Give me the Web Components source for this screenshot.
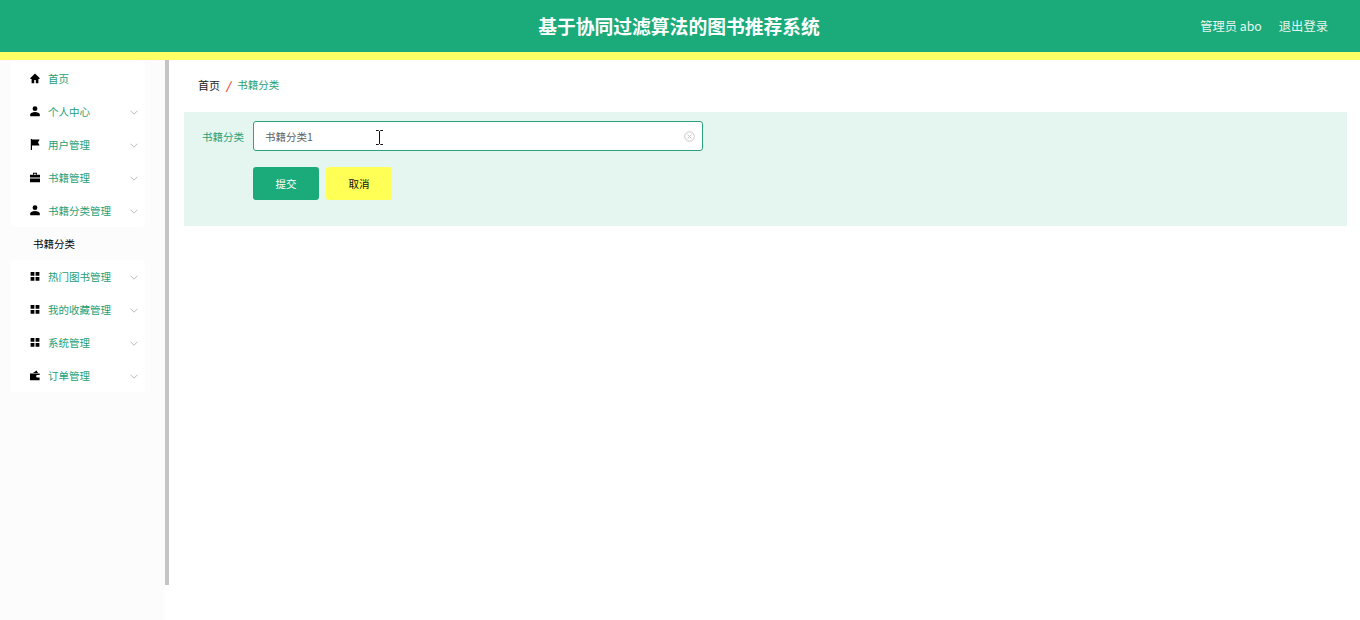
<!DOCTYPE html>
<html lang="zh">
<head>
<meta charset="utf-8">
<title>书籍分类</title>
<style>
	html, body { margin: 0; height: 100%; overflow: hidden; }
	body { font-family: "Microsoft YaHei", "Noto Sans CJK SC", "Liberation Sans", sans-serif; }
	.layout { display: flex; height: 560px; }
</style>
</head>
<body>
<app-header></app-header>
<div class="layout">
	<side-menu>
		<menu-row icon="home" label="首页" flat></menu-row>
		<menu-row icon="user" label="个人中心"></menu-row>
		<menu-row icon="flag" label="用户管理"></menu-row>
		<menu-row icon="case" label="书籍管理"></menu-row>
		<menu-row icon="user" label="书籍分类管理"></menu-row>
		<menu-sub slot="sub" label="书籍分类"></menu-sub>
		<menu-row slot="after" icon="grid" label="热门图书管理"></menu-row>
		<menu-row slot="after" icon="grid" label="我的收藏管理"></menu-row>
		<menu-row slot="after" icon="grid" label="系统管理"></menu-row>
		<menu-row slot="after" icon="wallet" label="订单管理"></menu-row>
	</side-menu>
	<main-panel></main-panel>
</div>

<script>
const icons = {
	home: '<path d="M5 .6.4 5v1h1.200v4.200h2.600V7h1.600v3.200h2.600V6h1.200V5z"/>',
	user: '<circle cx="5" cy="2.700" r="2.400"/><path d="M.2 10.200V8.600C.2 6.900 2.600 6 5 6s4.800.9 4.800 2.600v1.600z"/>',
	flag: '<path d="M.8 0h1.200v11H.8zM2 .6h7.600L8 3.600l1.600 3H2z"/>',
	case: '<path d="M3 2.400V.8h4v1.600H6V1.800H4v.6zM0 2.800h10v2.800H0zM0 6.400h10v3.800H0z"/>',
	grid: '<path d="M.6 1h3.800v3.800H.6zM5.600 1h3.800v3.800H5.600zM.6 6h3.800v3.800H.6zM5.600 6h3.800v3.800H5.600z"/>',
	wallet: '<path d="M0 3.400h9.600V5H7a1.400 1.400 0 0 0 0 2.600h2.600v2.600H0zM3 3l3.600-2.600L8 3z"/>',
};

class AppHeader extends HTMLElement {
	constructor() {
		super();
		this.attachShadow({ mode: 'open' });
		this.shadowRoot.innerHTML = `
			<style>
				:host { display: block; box-sizing: border-box; height: 60px; position: relative; background: #1bab7b; border-bottom: 8px solid #ffff66; color: #fff; }
				.title { text-align: center; font-size: 18.8px; font-weight: 700; line-height: 52px; padding-right: 2px; }
				.user { position: absolute; right: 32px; top: 0; display: flex; gap: 17px; font-size: 12.3px; line-height: 52px; color: #e6f6f0; }
			</style>
			<div class="title">基于协同过滤算法的图书推荐系统</div>
			<div class="user"><span>管理员 abo</span><span>退出登录</span></div>
		`;
	}
}

class SideMenu extends HTMLElement {
	constructor() {
		super();
		this.attachShadow({ mode: 'open' });
		this.shadowRoot.innerHTML = `
			<style>
				:host { display: block; box-sizing: border-box; flex: none; width: 165px; height: 560px; padding: 2px 0 0 11px; background: #fcfcfc; position: relative; }
				.card { width: 134px; background: #fff; border-radius: 4px; }
				.bar { position: absolute; left: 165px; top: 0; width: 4px; height: 525px; background: #c4c4c4; }
			</style>
			<div class="card"><slot></slot></div>
			<slot name="sub"></slot>
			<div class="card"><slot name="after"></slot></div>
			<div class="bar"></div>
		`;
	}
}

class MenuRow extends HTMLElement {
	constructor() {
		super();
		this.attachShadow({ mode: 'open' });
	}

	connectedCallback() {
		const chevron = this.hasAttribute('flat') ? '' : `
			<svg class="arrow" width="8" height="5" viewBox="0 0 8 5" fill="none" stroke="#a9a9a9" stroke-width=".8"><path d="M.5.7 4 4.200 7.500.7"/></svg>`;
		this.shadowRoot.innerHTML = `
			<style>
				:host { display: flex; align-items: center; height: 33px; padding-left: 19px; position: relative; font-size: 10.5px; color: #259e75; }
				.icon { width: 10px; height: 11px; fill: #000; margin-right: 8px; flex: none; }
				.arrow { position: absolute; left: 119px; top: 15px; }
				span { position: relative; top: -.5px; }
			</style>
			<svg class="icon" viewBox="0 0 10 11">${icons[this.getAttribute('icon')]}</svg>
			<span>${this.getAttribute('label')}</span>${chevron}
		`;
	}
}

class MenuSub extends HTMLElement {
	constructor() {
		super();
		this.attachShadow({ mode: 'open' });
	}

	connectedCallback() {
		this.shadowRoot.innerHTML = `
			<style>
				:host { display: block; height: 33px; line-height: 34px; padding-left: 22px; font-size: 10.5px; color: #000; }
			</style>
			${this.getAttribute('label')}
		`;
	}
}

class MainPanel extends HTMLElement {
	constructor() {
		super();
		this.attachShadow({ mode: 'open' });
		this.shadowRoot.innerHTML = `
			<style>
				:host { display: block; flex: 1; box-sizing: border-box; padding: 0 13px 0 19px; background: #fff; font-size: 10.5px; }
				.crumbs { display: flex; align-items: center; box-sizing: border-box; height: 52px; padding: 0 0 3px 14px; color: #259e75; }
				.crumbs b { font-weight: 400; color: #222; font-size: 11px; }
				.crumbs i { color: #e8452c; margin: 0 7px 0 6px; font-size: 11px; font-weight: 700; }
				.form { box-sizing: border-box; height: 114px; background: #e5f6f0; padding: 9px 0 0 18px; }
				.line { display: flex; align-items: center; height: 30px; }
				label { width: 51px; flex: none; color: #259e75; }
				.input { box-sizing: border-box; width: 450px; height: 30px; background: #fff; border: 1px solid #2aa37a; border-radius: 3px; display: flex; align-items: center; justify-content: space-between; padding: 0 7px 0 11px; color: #606060; position: relative; }
				.cursor { position: absolute; left: 122px; top: 8px; }
				.buttons { display: flex; gap: 7px; margin: 16px 0 0 51px; }
				.btn { width: 66px; height: 33px; display: flex; align-items: center; justify-content: center; border-radius: 3px; padding-bottom: 1px; box-sizing: border-box; }
				.ok { background: #1bab7b; color: #fff; }
				.no { background: #ffff55; color: #111; }
			</style>
			<div class="crumbs"><b>首页</b><i>/</i><span>书籍分类</span></div>
			<div class="form">
				<div class="line">
					<label>书籍分类</label>
					<div class="input">
						<span>书籍分类1</span>
						<svg class="cursor" width="7" height="15" viewBox="0 0 7 15" fill="none" stroke="#111"><path d="M0 .5h2.500l1 1 1-1H7M3.500 1.500v12M0 14.500h2.500l1-1 1 1H7"/></svg>
						<svg width="11" height="11" viewBox="0 0 11 11" fill="none" stroke="#c8c8c8"><circle cx="5.500" cy="5.500" r="4.800"/><path d="m3.500 3.500 4 4m0-4-4 4"/></svg>
					</div>
				</div>
				<div class="buttons">
					<div class="btn ok">提交</div>
					<div class="btn no">取消</div>
				</div>
			</div>
		`;
	}
}

customElements.define('app-header', AppHeader);
customElements.define('side-menu', SideMenu);
customElements.define('menu-row', MenuRow);
customElements.define('menu-sub', MenuSub);
customElements.define('main-panel', MainPanel);
</script>
</body>
</html>
